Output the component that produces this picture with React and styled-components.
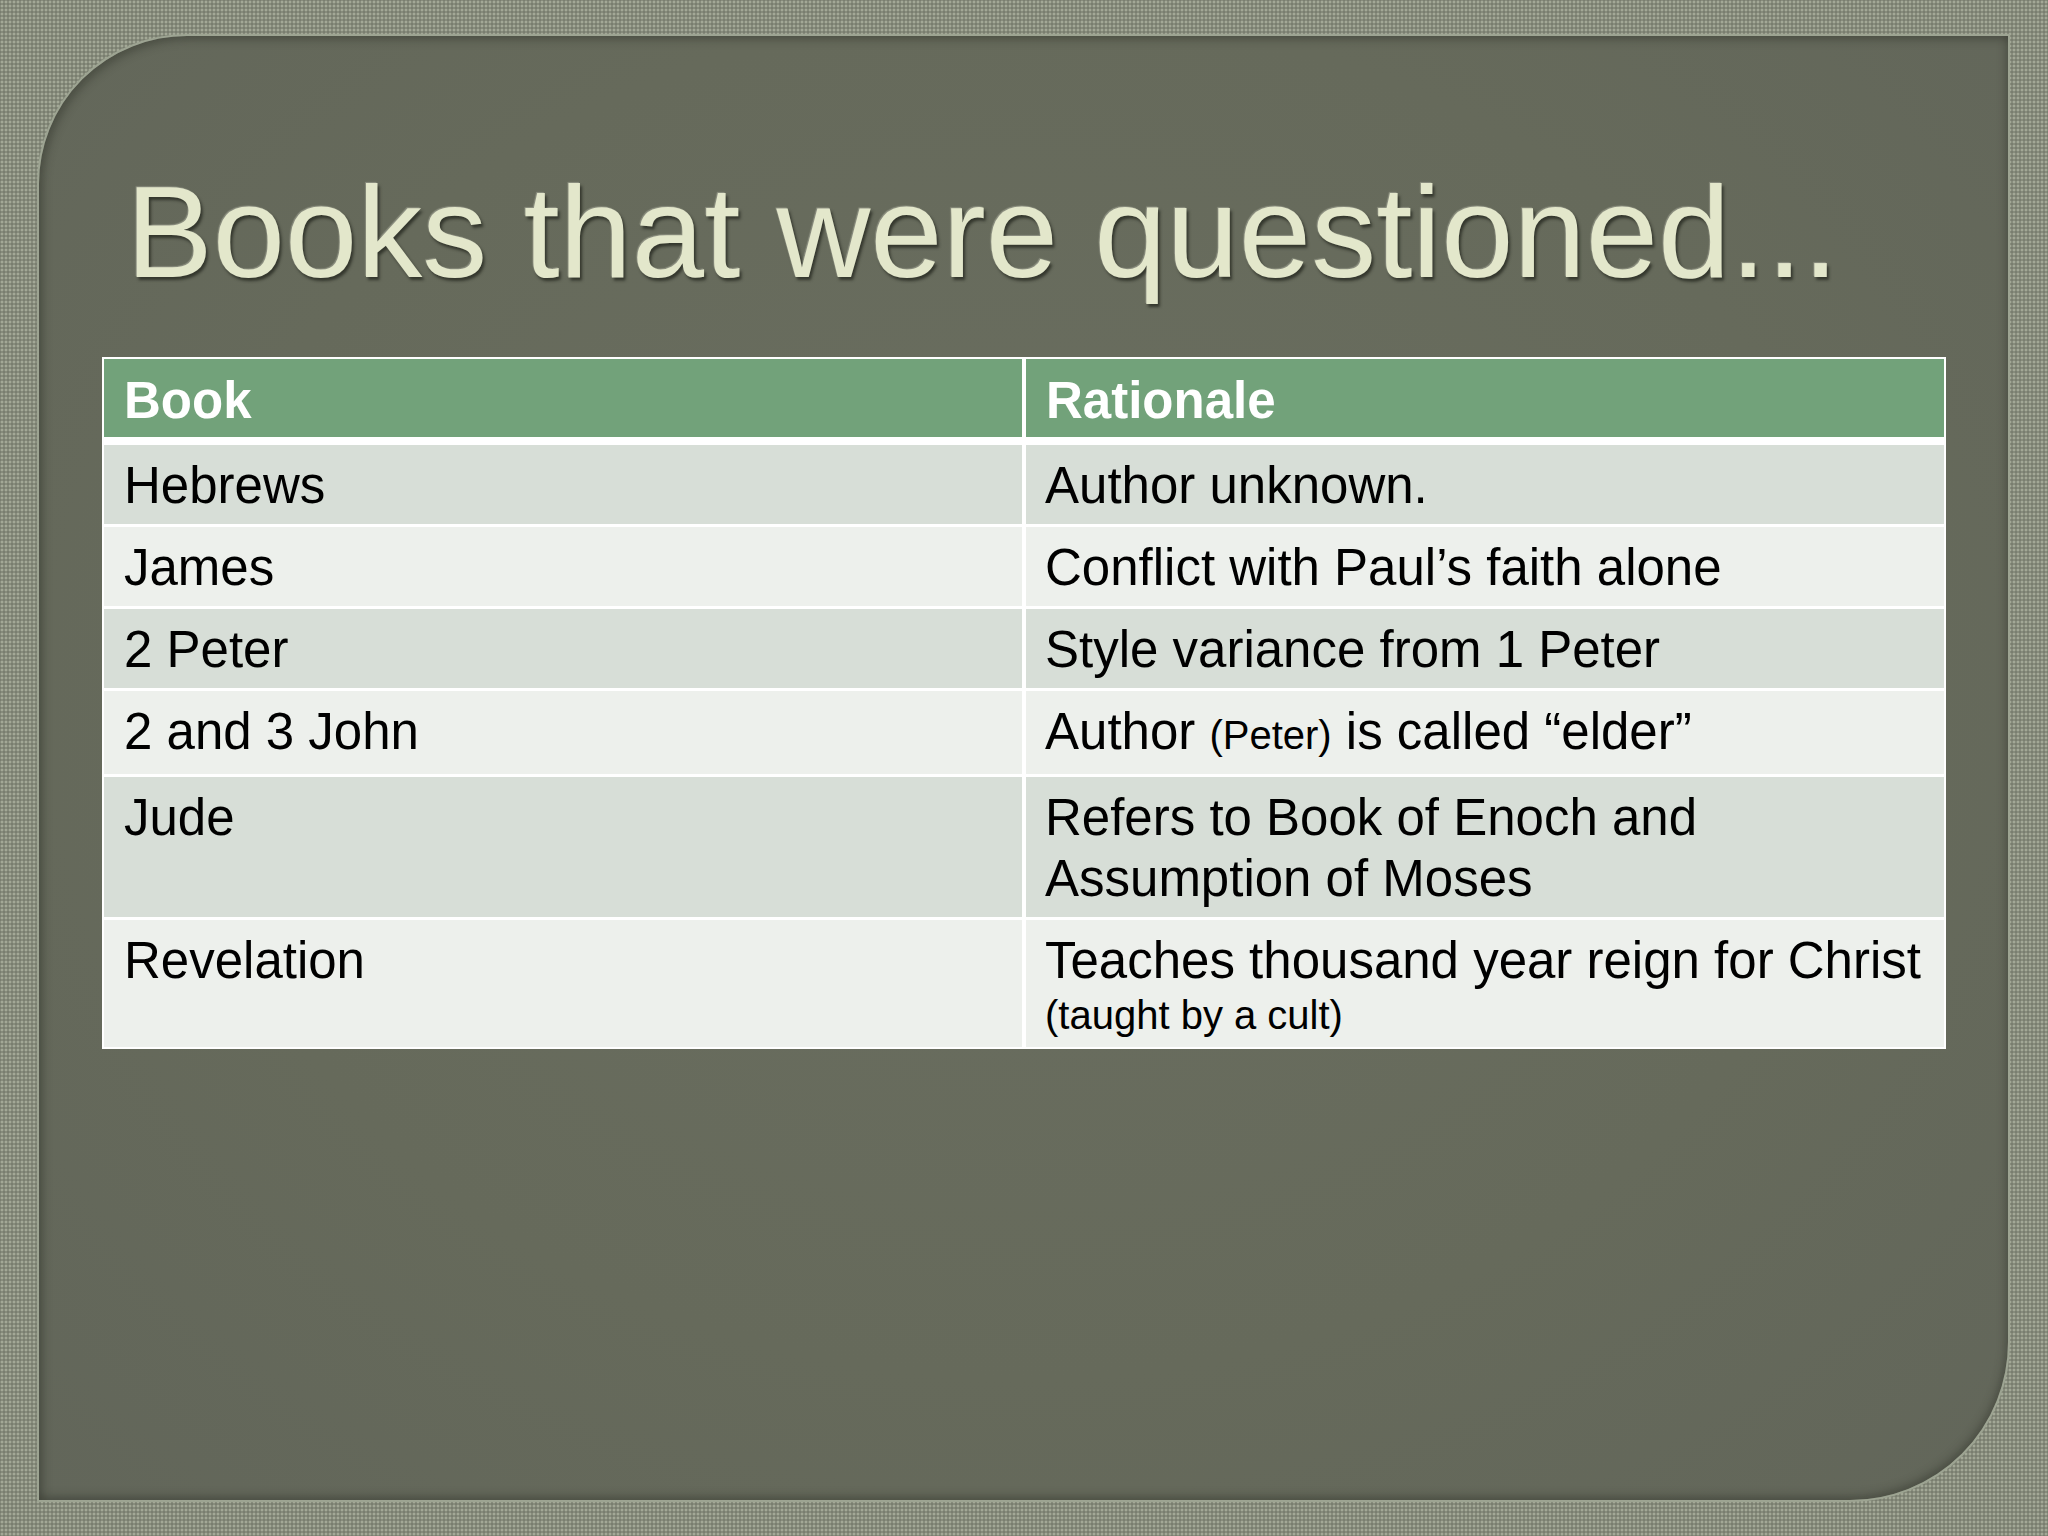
import React from 'react'
import styled, { createGlobalStyle } from 'styled-components'

const GlobalStyle = createGlobalStyle`
    html, body {
        margin: 0;
        padding: 0;
    }
    body {
        font-family: 'Liberation Sans', Arial, sans-serif;
        background-color: #858a7a;
    }
`

// Layout
const Page = styled.div`
    width: 2048px;
    height: 1536px;
    box-sizing: border-box;
    padding: 34px 38px 34px 37px;
    display: flex;
    background-color: #878c7c;
    background-image:
        radial-gradient(rgba(205, 210, 192, .4) 0.8px, transparent 1.4px),
        radial-gradient(rgba(95, 100, 88, .35) 0.8px, transparent 1.4px);
    background-size: 4px 4px, 4px 4px;
    background-position: 0 0, 2px 2px;
`
const Panel = styled.div`
    flex: 1;
    display: flex;
    flex-direction: column;
    border: 2px solid #9da492;
    border-radius: 150px 0 160px 0;
    background: radial-gradient(ellipse at 50% 45%, #6a6e60 0%, #666a5b 60%, #62665a 100%);
    box-shadow: inset 4px 4px 8px rgba(40, 42, 34, .35), inset -2px -4px 8px rgba(40, 42, 34, .35);
`
const Title = styled.h1`
    margin: 131px 0 0 87px;
    font-family: 'Liberation Sans', Arial, sans-serif;
    font-weight: 400;
    font-size: 130px;
    line-height: 130px;
    color: #e3e7cb;
    white-space: nowrap;
    text-shadow: 2px 3px 3px rgba(35, 37, 30, .75), -1px -1px 1px rgba(255, 255, 240, .25);
`

// Table
const Table = styled.div`
    margin: 60px 0 0 63px;
    width: 1844px;
    box-sizing: border-box;
    display: flex;
    flex-direction: column;
    gap: 3px;
    padding: 2px;
    background: #ffffff;
`
const Row = styled.div`
    display: grid;
    grid-template-columns: 918px 1fr;
    column-gap: 4px;
    margin-bottom: ${ ({ $header }) => $header ? '5px' : '0' };
    & > div {
        background: ${ ({ $header, $shade }) => $header ? '#72a27a' : $shade ? '#d7ded7' : '#edf0ec' };
    }
`
const Cell = styled.div`
    padding: 10px ${ ({ $wide }) => $wide ? '6px' : '20px' } 8px ${ ({ $wide }) => $wide ? '19px' : '20px' };
    font-size: 51px;
    line-height: 61px;
    color: #000000;
`
const HeadCell = styled.div`
    padding: 11px 20px 6px 20px;
    font-size: 51px;
    line-height: 61px;
    font-weight: 700;
    color: #ffffff;
`
const Line = styled.div`
    white-space: pre-wrap;
`
const Small = styled.span`
    font-size: 40px;
`
const Note = styled.div`
    font-size: 40px;
    line-height: 48px;
`

const rows = [
    { book: 'Hebrews', reason: 'Author unknown.' },
    { book: 'James', reason: 'Conflict with Paul’s faith alone' },
    { book: '2 Peter', reason: 'Style variance from 1 Peter' },
    { book: '2 and 3 John', reason: 'Author ', aside: '(Peter)', tail: ' is called “elder”' },
    { book: 'Jude', reason: 'Refers to Book of Enoch and Assumption of Moses' },
    { book: 'Revelation', reason: 'Teaches thousand year reign for Christ', note: '(taught by a cult)' },
]

export default function App () {
    return (
        <>
            <GlobalStyle />
            <Page>
                <Panel>
                    <Title>Books that were questioned...</Title>
                    <Table>
                        <Row $header>
                            <HeadCell>Book</HeadCell>
                            <HeadCell>Rationale</HeadCell>
                        </Row>
                        {rows.map((r, i) => (
                            <Row key={r.book} $shade={i % 2 === 0}>
                                <Cell>{r.book}</Cell>
                                <Cell $wide>
                                    <Line>
                                        {r.reason}
                                        {r.aside && <Small>{r.aside}</Small>}
                                        {r.tail}
                                    </Line>
                                    {r.note && <Note>{r.note}</Note>}
                                </Cell>
                            </Row>
                        ))}
                    </Table>
                </Panel>
            </Page>
        </>
    )
}
